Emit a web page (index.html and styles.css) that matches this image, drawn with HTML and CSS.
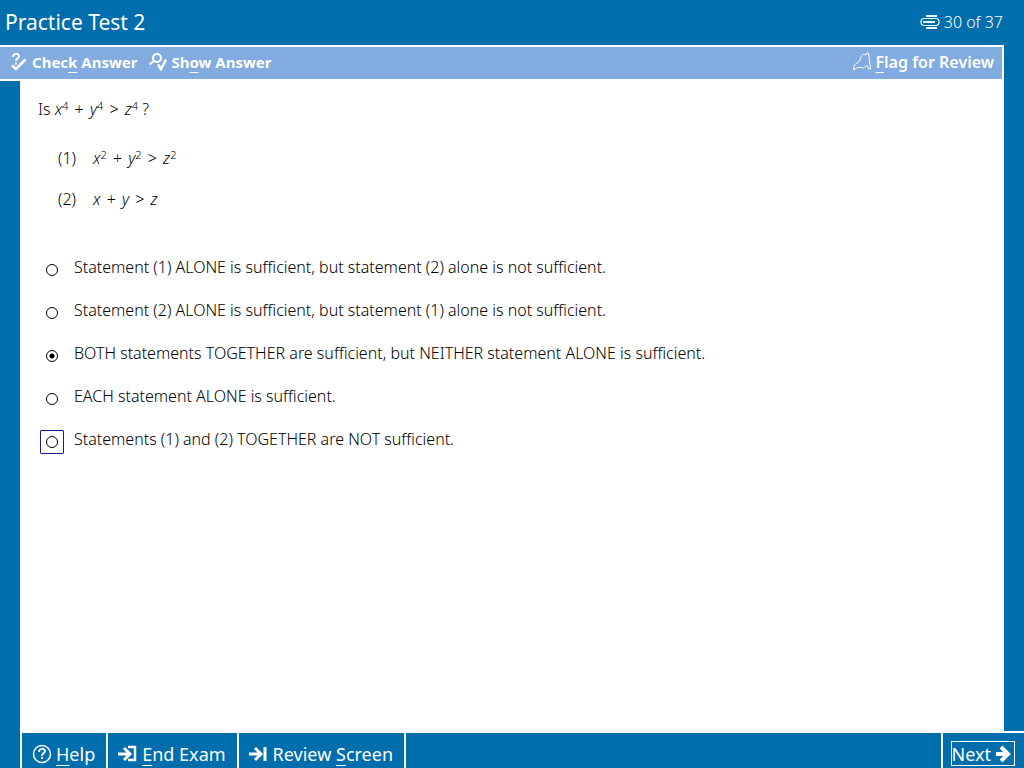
FILE: index.html
```html
<!DOCTYPE html>
<html lang="en">
<head>
    <meta charset="UTF-8">
    <meta name="viewport" content="width=device-width, initial-scale=1.0">
    <title>Practice Test 2</title>
    <link rel="stylesheet" href="styles.css">
</head>
<body>
    <header class="header">
        <h1>Practice Test 2</h1>
        <div class="progress">
            <svg width="20" height="16" viewBox="0 0 20 16" fill="none" stroke="#e8fbff">
                <path d="M6 2h11M6 14h11" stroke-width="2"/>
                <rect x="1" y="4.500" width="18" height="7" rx="3" stroke-width="1.200"/>
                <path d="M3 8h12" stroke-width="2"/>
            </svg>
            <span>30 of 37</span>
        </div>
    </header>

    <nav class="toolbar">
        <button class="tool" type="button">
            <svg width="18" height="20" viewBox="0 0 18 20" fill="none" stroke="white">
                <path d="M3 5c0-4 6-4 6-1 0 3-3 2-3 5M6 10.500v2" stroke-width="2"/>
                <path d="M2 13.500l4 3.500 9.500-9.500" stroke-width="2.500"/>
            </svg>
            <span>Chec<u>k</u> Answer</span>
        </button>
        <button class="tool" type="button">
            <svg width="18" height="20" viewBox="0 0 18 20" fill="none" stroke="white">
                <circle cx="8" cy="6" r="4" stroke-width="2"/>
                <path d="M5 9l-4.500 3.500" stroke-width="2"/>
                <path d="M9 12.500l3 4.500 5-9.500" stroke-width="2.500"/>
            </svg>
            <span>Sh<u>o</u>w Answer</span>
        </button>
        <button class="tool flag" type="button">
            <svg width="18" height="20" viewBox="0 0 18 20" fill="none" stroke="white">
                <path d="M14 1l-1 2C9 1 8 4 7 8c-1 3-5 3-6 6l-.5 4c4-3 7-3 9-2 2 0 3-3 5-2l1 3h2L15.500 1z"/>
            </svg>
            <span><u>F</u>lag for Review</span>
        </button>
    </nav>

    <main class="content">
        <p class="question">Is <i>x</i><sup>4</sup> <b>+</b> <i>y</i><sup>4</sup> <b>&gt;</b> <i>z</i><sup>4</sup> ?</p>
        <div class="statements">
            <p><span class="number">(1)</span><span><i>x</i><sup>2</sup> <b>+</b> <i>y</i><sup>2</sup> <b>&gt;</b> <i>z</i><sup>2</sup></span></p>
            <p><span class="number">(2)</span><span><i>x</i> <b>+</b> <i>y</i> <b>&gt;</b> <i>z</i></span></p>
        </div>

        <form class="answers">
            <label class="answer">
                <span class="mark"><input type="radio" name="answer"></span>
                <span>Statement (1) ALONE is sufficient, but statement (2) alone is not sufficient.</span>
            </label>
            <label class="answer">
                <span class="mark"><input type="radio" name="answer"></span>
                <span>Statement (2) ALONE is sufficient, but statement (1) alone is not sufficient.</span>
            </label>
            <label class="answer">
                <span class="mark"><input type="radio" name="answer" checked></span>
                <span>BOTH statements TOGETHER are sufficient, but NEITHER statement ALONE is sufficient.</span>
            </label>
            <label class="answer">
                <span class="mark"><input type="radio" name="answer"></span>
                <span>EACH statement ALONE is sufficient.</span>
            </label>
            <label class="answer">
                <span class="mark current"><input type="radio" name="answer"></span>
                <span>Statements (1) and (2) TOGETHER are NOT sufficient.</span>
            </label>
        </form>
    </main>

    <footer class="footer">
        <button class="action" type="button">
            <svg width="20" height="20" viewBox="0 0 20 20" fill="none" stroke="white">
                <circle cx="10" cy="10" r="8.500" stroke-width="1.500"/>
                <path d="M7 8c0-4 6-4 6-1 0 2-3 2-3 5M10 13v2" stroke-width="2"/>
            </svg>
            <span><u>H</u>elp</span>
        </button>
        <button class="action" type="button">
            <svg width="20" height="20" viewBox="0 0 20 20" fill="none" stroke="white" stroke-width="3">
                <path d="M0 10h11M6 4l6 6-6 6"/>
                <path d="M10 3h7v13h-7" stroke-width="2.500"/>
            </svg>
            <span><u>E</u>nd Exam</span>
        </button>
        <button class="action" type="button">
            <svg width="20" height="20" viewBox="0 0 20 20" fill="none" stroke="white" stroke-width="3">
                <path d="M0 10h11M6 4l6 6-6 6M16 3v14"/>
            </svg>
            <span>Review <u>S</u>creen</span>
        </button>
        <div class="next">
            <button class="next-button" type="button">
                <span><u>N</u>ext</span>
                <svg width="16" height="18" viewBox="0 0 16 18" fill="none" stroke="white" stroke-width="4">
                    <path d="M1 9h12M6 2l7 7-7 7"/>
                </svg>
            </button>
        </div>
    </footer>
</body>
</html>
```

FILE: styles.css
```css
* {
    box-sizing: border-box;
}
body {
    display: flex;
    flex-direction: column;
    min-height: 100vh;
    margin: 0;
    background-color: #006dad;
    color: black;
    font-family: "Noto Sans", Tahoma, sans-serif;
    font-size: 16px;
    font-weight: 300;
}
h1, p {
    margin: 0;
    font-weight: 300;
}
button {
    display: flex;
    align-items: center;
    padding: 0;
    border: none;
    background: none;
    color: white;
    font-family: "Noto Sans", Tahoma, sans-serif;
    cursor: pointer;
}
u {
    text-decoration-thickness: 1px;
    text-underline-offset: 4px;
}
svg {
    flex: none;
}
.header {
    display: flex;
    align-items: center;
    justify-content: space-between;
    height: 45px;
    padding: 0 21px 1px 5px;
    color: white;
}
.header h1 {
    font-size: 21px;
    font-weight: 400;
}
.progress {
    display: flex;
    align-items: center;
    gap: 4px;
}
.toolbar {
    display: flex;
    align-items: center;
    gap: 12px;
    height: 36px;
    margin-right: 20px;
    padding: 0 8px 2px 10px;
    border: 2px solid white;
    border-left: none;
    background-color: #82abdf;
}
.tool {
    gap: 4px;
    font-size: 15px;
    font-weight: 700;
}
.flag {
    margin-left: auto;
    font-size: 16px;
    font-weight: 600;
}
.content {
    flex: 1;
    margin: 0 20px;
    padding: 17px 18px;
    background-color: white;
    line-height: 22px;
}
.content b {
    margin: 0 2px;
    font-weight: 300;
}
sup {
    font-size: 11px;
    line-height: 0;
    vertical-align: 5px;
}
.statements {
    display: flex;
    flex-direction: column;
    gap: 19px;
    margin: 27px 0 46px 20px;
}
.statements p {
    display: flex;
}
.number {
    width: 35px;
}
.answers {
    display: flex;
    flex-direction: column;
    gap: 19px;
}
.answer {
    display: flex;
    gap: 10px;
    height: 24px;
}
.mark {
    display: flex;
    align-items: center;
    justify-content: center;
    width: 24px;
    height: 24px;
    margin: 2px 0 0 2px;
    border: 1px solid transparent;
    border-radius: 1px;
}
.current {
    border-color: #1c1c8c;
}
input[type="radio"] {
    appearance: none;
    width: 12px;
    height: 12px;
    margin: 0;
    border: 1px solid black;
    border-radius: 50%;
}
input[type="radio"]:checked {
    background: radial-gradient(circle, black 2px, white 3px);
}
.footer {
    display: flex;
    height: 37px;
    margin-left: 20px;
    border-top: 2px solid white;
    border-left: 2px solid white;
}
.action {
    gap: 4px;
    padding: 6px 11px 0 10px;
    border-right: 2px solid white;
    font-size: 18px;
}
.next {
    display: flex;
    align-items: center;
    margin-left: auto;
    padding: 6px 9px 0 8px;
    border-left: 2px solid white;
}
.next-button {
    gap: 4px;
    height: 25px;
    padding: 0 3px 0 0;
    border: 1px solid white;
    font-size: 18px;
}
```
